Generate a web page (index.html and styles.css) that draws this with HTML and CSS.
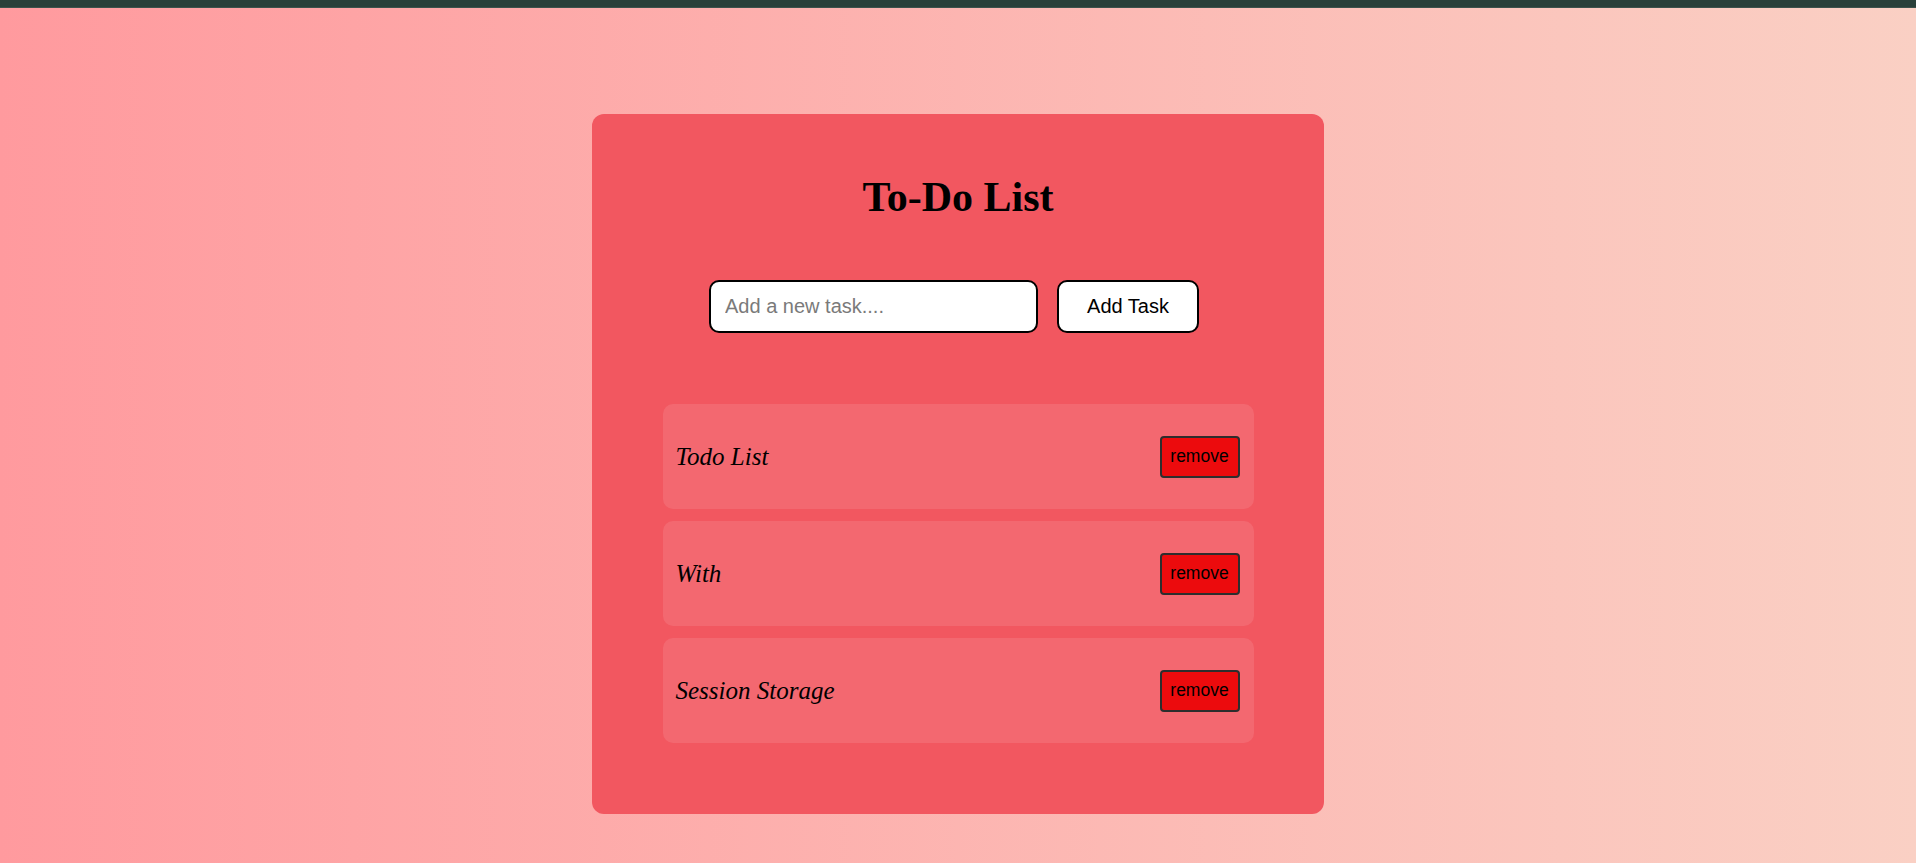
FILE: index.html
```html
<!DOCTYPE html>
<html lang="en">
<head>
<meta charset="utf-8">
<title>To-Do List</title>
<link rel="stylesheet" href="styles.css">
</head>
<body>
<div class="topbar"></div>
<main class="page">
  <section class="card">
    <h1 class="title">To-Do List</h1>
    <div class="entry">
      <input class="task-input" type="text" placeholder="Add a new task....">
      <button class="add-btn">Add Task</button>
    </div>
    <ul class="tasks">
      <li class="task"><span class="task-text">Todo List</span><button class="remove-btn">remove</button></li>
      <li class="task"><span class="task-text">With</span><button class="remove-btn">remove</button></li>
      <li class="task"><span class="task-text">Session Storage</span><button class="remove-btn">remove</button></li>
    </ul>
  </section>
</main>
</body>
</html>
```
FILE: styles.css
```css
* { box-sizing: border-box; }
html, body { margin: 0; padding: 0; }
body {
  height: 863px;
  overflow: hidden;
  background: linear-gradient(90deg, #ff9a9e 0%, #fad0c4 100%);
  font-family: "Liberation Serif", "Times New Roman", serif;
}
.topbar {
  height: 8px;
  background: #29403a;
  border-bottom: 1px solid #3c524c;
}
.page {
  display: flex;
  justify-content: center;
  padding-top: 106px;
}
.card {
  width: 732px;
  height: 700px;
  background: #f25760;
  border-radius: 12px;
  padding: 50px 0 0;
  display: flex;
  flex-direction: column;
  align-items: center;
}
.title {
  margin: 0;
  font-size: 42px;
  font-weight: bold;
  line-height: 66px;
  color: #000;
}
.entry {
  margin-top: 50px;
  display: flex;
  gap: 19px;
  transform: translateX(-4px);
}
.task-input {
  width: 329px;
  height: 53px;
  border: 2px solid #000;
  border-radius: 10px;
  padding: 0 14px;
  font-family: "Liberation Sans", Arial, sans-serif;
  font-size: 20px;
  color: #000;
  background: #fff;
  outline: none;
}
.task-input::placeholder { color: #7a7a7a; }
.add-btn {
  width: 142px;
  height: 53px;
  border: 2px solid #000;
  border-radius: 10px;
  background: #fff;
  font-family: "Liberation Sans", Arial, sans-serif;
  font-size: 20px;
  color: #000;
  padding: 0;
}
.tasks {
  list-style: none;
  margin: 71px 0 0;
  padding: 0;
  width: 591px;
  display: flex;
  flex-direction: column;
  gap: 12px;
}
.task {
  height: 105px;
  display: flex;
  align-items: center;
  justify-content: space-between;
  padding: 0 14px 0 13px;
  background: rgba(255, 255, 255, 0.1);
  border-radius: 10px;
}
.task-text {
  font-style: italic;
  font-size: 25px;
  color: #000;
}
.remove-btn {
  width: 80px;
  height: 42px;
  padding: 0;
  background: #ec0b0d;
  border: 2px solid #2d2d2d;
  border-radius: 4px;
  font-family: "Liberation Sans", Arial, sans-serif;
  font-size: 17.5px;
  color: #000;
}
```
